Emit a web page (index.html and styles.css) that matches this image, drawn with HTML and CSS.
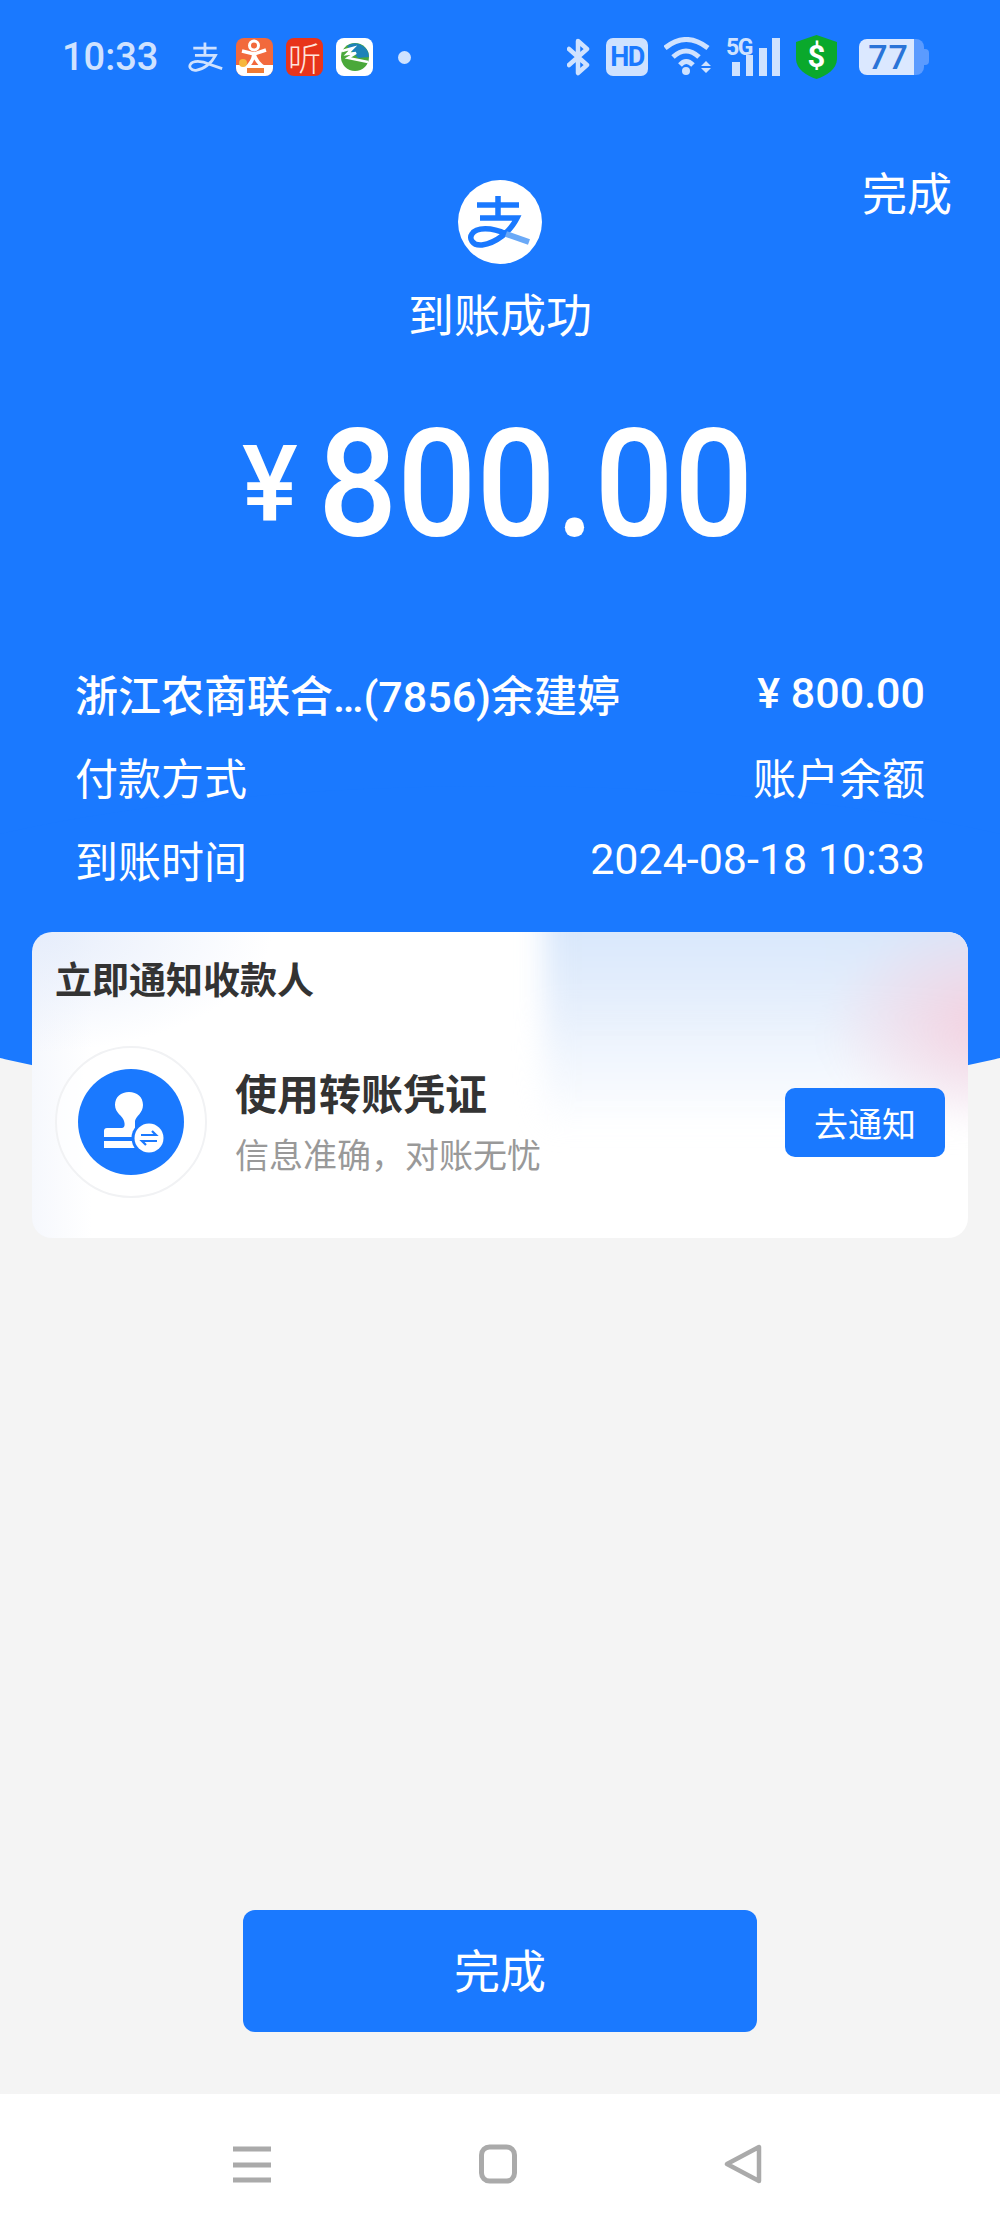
FILE: index.html
```html
<!DOCTYPE html>
<html lang="zh-CN">
<head>
  <meta charset="UTF-8">
  <meta name="viewport" content="width=device-width, initial-scale=1.0">
  <title>到账成功</title>
  <link rel="stylesheet" href="styles.css">
</head>
<body>
  <div class="page">
    <div class="hero">
      <div class="status-bar">
        <div class="status-left">
          <span class="status-time">10:33</span>
          <svg class="icon-zhi" viewBox="10 14 62 54"><path d="M19 25H61M40 15V38M22 38H59C52 52 38 63 24 65C14 66 11 58 14 54C18 47 34 47 48 54L71 62" fill="none" stroke="#cfe2ff" stroke-width="5"/></svg>
          <svg class="app-icon" viewBox="0 0 37 38">
            <rect width="37" height="38" rx="8" fill="#f2693c"/>
            <path d="M0 27H37V30A8 8 0 0 1 29 38H8A8 8 0 0 1 0 30Z" fill="#fff"/>
            <circle cx="18" cy="7.500" r="4.500" fill="none" stroke="#fff" stroke-width="3"/>
            <path d="M6 13L18 16L30 12M18 16C17 22 14 27 9 31M18 16C20 23 24 27 29 30" fill="none" stroke="#fff" stroke-width="3.500"/>
            <circle cx="7" cy="25" r="4" fill="#f6b73c"/>
            <rect x="11" y="30" width="17" height="5" fill="#ef7b35"/>
          </svg>
          <span class="app-icon app-ting">听</span>
          <svg class="app-icon" viewBox="0 0 37 38">
            <rect width="37" height="38" rx="8" fill="#fff"/>
            <circle cx="19" cy="19" r="14" fill="#4aa83a"/>
            <path d="M11 8A14 14 0 0 1 33 19L22 20Z" fill="#1d82b8"/>
            <path d="M6 13L17 10L11 16L20 15L12 20L32 24" fill="none" stroke="#fff" stroke-width="2.500"/>
          </svg>
          <span class="status-dot"></span>
        </div>
        <div class="status-right">
          <svg class="icon-bt" viewBox="0 0 23 38"><path d="M2 11L20 27L11 35V3L20 11L2 27" fill="none" stroke="#cfe2ff" stroke-width="4.500" stroke-linejoin="round" stroke-linecap="round"/></svg>
          <span class="hd-badge">HD</span>
          <svg class="icon-wifi" viewBox="0 0 47 40">
            <g fill="none" stroke="#cfe2ff" stroke-width="5">
              <path d="M1 11Q22 -6 44 11"/>
              <path d="M9 20Q22 8 35 20"/>
              <path d="M16 28Q22 21 29 28"/>
            </g>
            <circle cx="22" cy="34" r="4" fill="#cfe2ff"/>
            <path d="M37 29L42 24L47 29ZM37 31H47L42 36Z" fill="#cfe2ff"/>
          </svg>
          <svg class="icon-signal" viewBox="0 0 53 44">
            <text class="signal-text" x="-1" y="20">5G</text>
            <path d="M5 27H13V41H5ZM19 20H26V41H19ZM32 13H40V41H32ZM45 3H53V41H45Z" fill="#cfe2ff"/>
          </svg>
          <svg class="icon-shield" viewBox="0 0 41 44">
            <path d="M20.500 0L41 7V24C41 34 30 41 20.500 44C11 41 0 34 0 24V7Z" fill="#0aa92c"/>
            <text class="shield-text" x="20.500" y="32">$</text>
          </svg>
          <div class="battery"><span class="battery-num">77</span></div>
        </div>
      </div>

      <div class="head">
        <div></div>
        <div class="head-center">
          <svg class="alipay-logo" viewBox="0 0 84 84">
            <circle cx="42" cy="42" r="42" fill="#fff"/>
            <path d="M19 25H61M40 16V38M22 38H59C52 52 38 63 24 65C14 66 11 58 14 54C18 47 34 47 48 54" fill="none" stroke="#1a79ff" stroke-width="5.500"/>
            <path d="M48 54L71 62" fill="none" stroke="#6aa9f7" stroke-width="6"/>
          </svg>
          <div class="head-title">到账成功</div>
        </div>
        <div class="head-done">完成</div>
      </div>

      <div class="amount">
        <span class="amount-yen">¥</span>
        <span class="amount-num">800.00</span>
      </div>

      <div class="info-rows">
        <div class="info-row info-row-main">
          <span>浙江农商联合…(7856)余建婷</span>
          <span>¥ 800.00</span>
        </div>
        <div class="info-row">
          <span>付款方式</span>
          <span>账户余额</span>
        </div>
        <div class="info-row">
          <span>到账时间</span>
          <span>2024-08-18 10:33</span>
        </div>
      </div>
    </div>

    <div class="card">
      <div class="card-title">立即通知收款人</div>
      <div class="card-item">
        <div class="stamp-ring">
          <svg class="stamp-icon" viewBox="0 0 106 106">
            <circle cx="53" cy="53" r="53" fill="#1a79ff"/>
            <path d="M26 62Q26 59 29 59H44C47 59 47 55 46 52C45 47 37 44 37 36C37 28 43 23 51 23C59 23 65 28 65 36C65 44 58 47 57 52V59H70V68H26Z" fill="#fff"/>
            <rect x="26" y="72" width="44" height="7" fill="#fff"/>
            <circle cx="71" cy="69" r="17.500" fill="#1a79ff"/>
            <circle cx="71" cy="69" r="14.500" fill="#fff"/>
            <path d="M63 66H78L74 62M79 72H64L68 76" fill="none" stroke="#1a79ff" stroke-width="2.200"/>
          </svg>
        </div>
        <div class="item-text">
          <div class="item-title">使用转账凭证</div>
          <div class="item-sub">信息准确，对账无忧</div>
        </div>
        <button class="notify-btn">去通知</button>
      </div>
    </div>

    <div class="filler"></div>
    <button class="done-btn">完成</button>

    <div class="nav-bar">
      <svg class="nav-icon" viewBox="0 0 38 40"><path d="M0 5H38M0 21H38M0 36H38" stroke="#aaa" stroke-width="5" stroke-linecap="round"/></svg>
      <svg class="nav-icon" viewBox="0 0 38 40"><rect x="2.500" y="3" width="33" height="34" rx="8" fill="none" stroke="#aaa" stroke-width="5"/></svg>
      <svg class="nav-icon" viewBox="0 0 38 40"><path d="M35 3V37L3 20Z" fill="none" stroke="#aaa" stroke-width="4.500" stroke-linejoin="round"/></svg>
    </div>
  </div>
</body>
</html>
```

FILE: styles.css
```css
* {
  box-sizing: border-box;
  margin: 0;
  padding: 0;
}
body {
  font-family: Roboto, "Noto Sans CJK SC", sans-serif;
  background-color: #f4f4f4;
}
.page {
  display: flex;
  flex-direction: column;
  height: 2233px;
  overflow: hidden;
  background-color: #f4f4f4;
}

/* blue top part */
.hero {
  position: relative;
  height: 946px;
  background-color: #1a79ff;
  color: white;
}
.hero::after {
  content: "";
  position: absolute;
  left: -200px;
  top: 786px;
  width: 1400px;
  height: 320px;
  border-radius: 50%;
  background-color: #1a79ff;
}
.status-bar {
  display: flex;
  justify-content: space-between;
  align-items: center;
  height: 114px;
  padding: 0 81px 0 62px;
  color: #cfe2ff;
}
.status-left,
.status-right {
  display: flex;
  align-items: center;
}
.status-left {
  gap: 13px;
}
.status-right {
  gap: 16px;
}
.status-time {
  width: 113px;
  font-size: 38px;
  font-weight: 500;
}
.icon-zhi {
  width: 35px;
  height: 30px;
}
.app-icon {
  width: 37px;
  height: 38px;
}
.app-ting {
  display: flex;
  align-items: center;
  justify-content: center;
  border-radius: 8px;
  background-color: #e8341a;
  color: #ffe4dc;
  font-size: 33px;
  font-weight: 300;
}
.status-dot {
  width: 13px;
  height: 13px;
  margin-left: 12px;
  border-radius: 50%;
  background-color: #cfe2ff;
}
.icon-bt {
  width: 23px;
  height: 38px;
}
.hd-badge {
  display: flex;
  align-items: center;
  justify-content: center;
  width: 42px;
  height: 38px;
  border-radius: 7px;
  background-color: #cfe2ff;
  color: #1a79ff;
  font-size: 27px;
  font-weight: 700;
  letter-spacing: -1.500px;
}
.icon-wifi {
  width: 47px;
  height: 40px;
}
.icon-signal {
  width: 53px;
  height: 44px;
}
.signal-text {
  font-size: 23px;
  font-weight: 700;
  fill: #cfe2ff;
  letter-spacing: -1.500px;
}
.icon-shield {
  width: 41px;
  height: 44px;
}
.shield-text {
  font-size: 31px;
  font-weight: 700;
  fill: white;
  text-anchor: middle;
}
.battery {
  position: relative;
  width: 65px;
  height: 36px;
  margin-left: 6px;
  padding-right: 6px;
  border-radius: 8px;
  background: linear-gradient(to right, #dbe8ff 85%, #5b9bff 85%);
  display: flex;
  align-items: center;
  justify-content: center;
  margin-right: -5px;
}
.battery::after {
  content: "";
  position: absolute;
  right: -5px;
  top: 10px;
  width: 5px;
  height: 16px;
  border-radius: 0 4px 4px 0;
  background-color: #5b9bff;
}
.battery-num {
  color: #2a74d8;
  font-size: 34px;
  font-weight: 500;
  letter-spacing: 1px;
}

.head {
  display: grid;
  grid-template-columns: 1fr auto 1fr;
  margin-top: 66px;
  padding: 0 48px;
}
.head-center {
  display: flex;
  flex-direction: column;
  align-items: center;
}
.alipay-logo {
  width: 84px;
  height: 84px;
}
.head-title {
  margin-top: 22px;
  font-size: 46px;
  line-height: 60px;
}
.head-done {
  justify-self: end;
  font-size: 45px;
  line-height: 50px;
  margin-top: -9px;
}

.amount {
  display: flex;
  align-items: center;
  height: 150px;
  margin-top: 64px;
  padding-left: 242px;
}
.amount-yen {
  width: 76px;
  font-size: 105px;
  font-weight: 500;
}
.amount-num {
  font-size: 150px;
  font-weight: 500;
  transform: scaleX(0.93);
  transform-origin: left center;
}

.info-rows {
  position: relative;
  z-index: 1;
  margin-top: 91px;
  padding: 0 75px;
}
.info-row {
  display: flex;
  justify-content: space-between;
  align-items: center;
  height: 83px;
  font-size: 43px;
}
.info-row-main {
  font-weight: 500;
}

/* notify card */
.card {
  position: relative;
  z-index: 1;
  overflow: hidden;
  height: 306px;
  margin: -14px 32px 0;
  padding: 30px 23px 0 23px;
  border-radius: 20px;
  background:
    radial-gradient(ellipse 240px 120px at 0 0, #e6edfb, rgba(255, 255, 255, 0)),
    linear-gradient(to right, #f6f8fd, #ffffff 60px);
  background-color: white;
}
.card::before {
  content: "";
  position: absolute;
  left: 512px;
  top: -30px;
  width: 460px;
  height: 230px;
  background:
    radial-gradient(ellipse 170px 110px at 98% 52%, rgba(245, 205, 220, 0.95), rgba(245, 205, 220, 0)),
    linear-gradient(to bottom, #d4e5fb 0%, #e6effc 45%, rgba(255, 255, 255, 0) 100%);
  filter: blur(14px);
}
.card-title {
  position: relative;
  z-index: 1;
  font-size: 37px;
  font-weight: 700;
  line-height: 40px;
  color: #333;
}
.card-item {
  position: relative;
  z-index: 1;
  display: flex;
  align-items: center;
  margin-top: 44px;
}
.stamp-ring {
  display: flex;
  align-items: center;
  justify-content: center;
  width: 152px;
  height: 152px;
  border: 2px solid #f1f2f4;
  border-radius: 50%;
  background-color: rgba(255, 255, 255, 0.6);
}
.stamp-icon {
  width: 106px;
  height: 106px;
}
.item-text {
  margin-left: 28px;
  padding-top: 8px;
}
.item-title {
  font-size: 42px;
  font-weight: 700;
  line-height: 56px;
  color: #333;
}
.item-sub {
  margin-top: 4px;
  font-size: 34px;
  line-height: 56px;
  color: #999;
}
.notify-btn {
  margin-left: auto;
  width: 160px;
  height: 69px;
  border: none;
  border-radius: 10px;
  background-color: #1a79ff;
  color: white;
  font-family: inherit;
  font-size: 34px;
}

.filler {
  flex: 1;
}
.done-btn {
  align-self: center;
  width: 514px;
  height: 122px;
  margin-bottom: 62px;
  padding-bottom: 6px;
  border: none;
  border-radius: 12px;
  background-color: #1a79ff;
  color: white;
  font-family: inherit;
  font-size: 46px;
}

.nav-bar {
  display: flex;
  justify-content: space-between;
  align-items: center;
  height: 139px;
  padding: 0 238px 0 233px;
  background-color: white;
}
.nav-icon {
  width: 38px;
  height: 40px;
}
```
